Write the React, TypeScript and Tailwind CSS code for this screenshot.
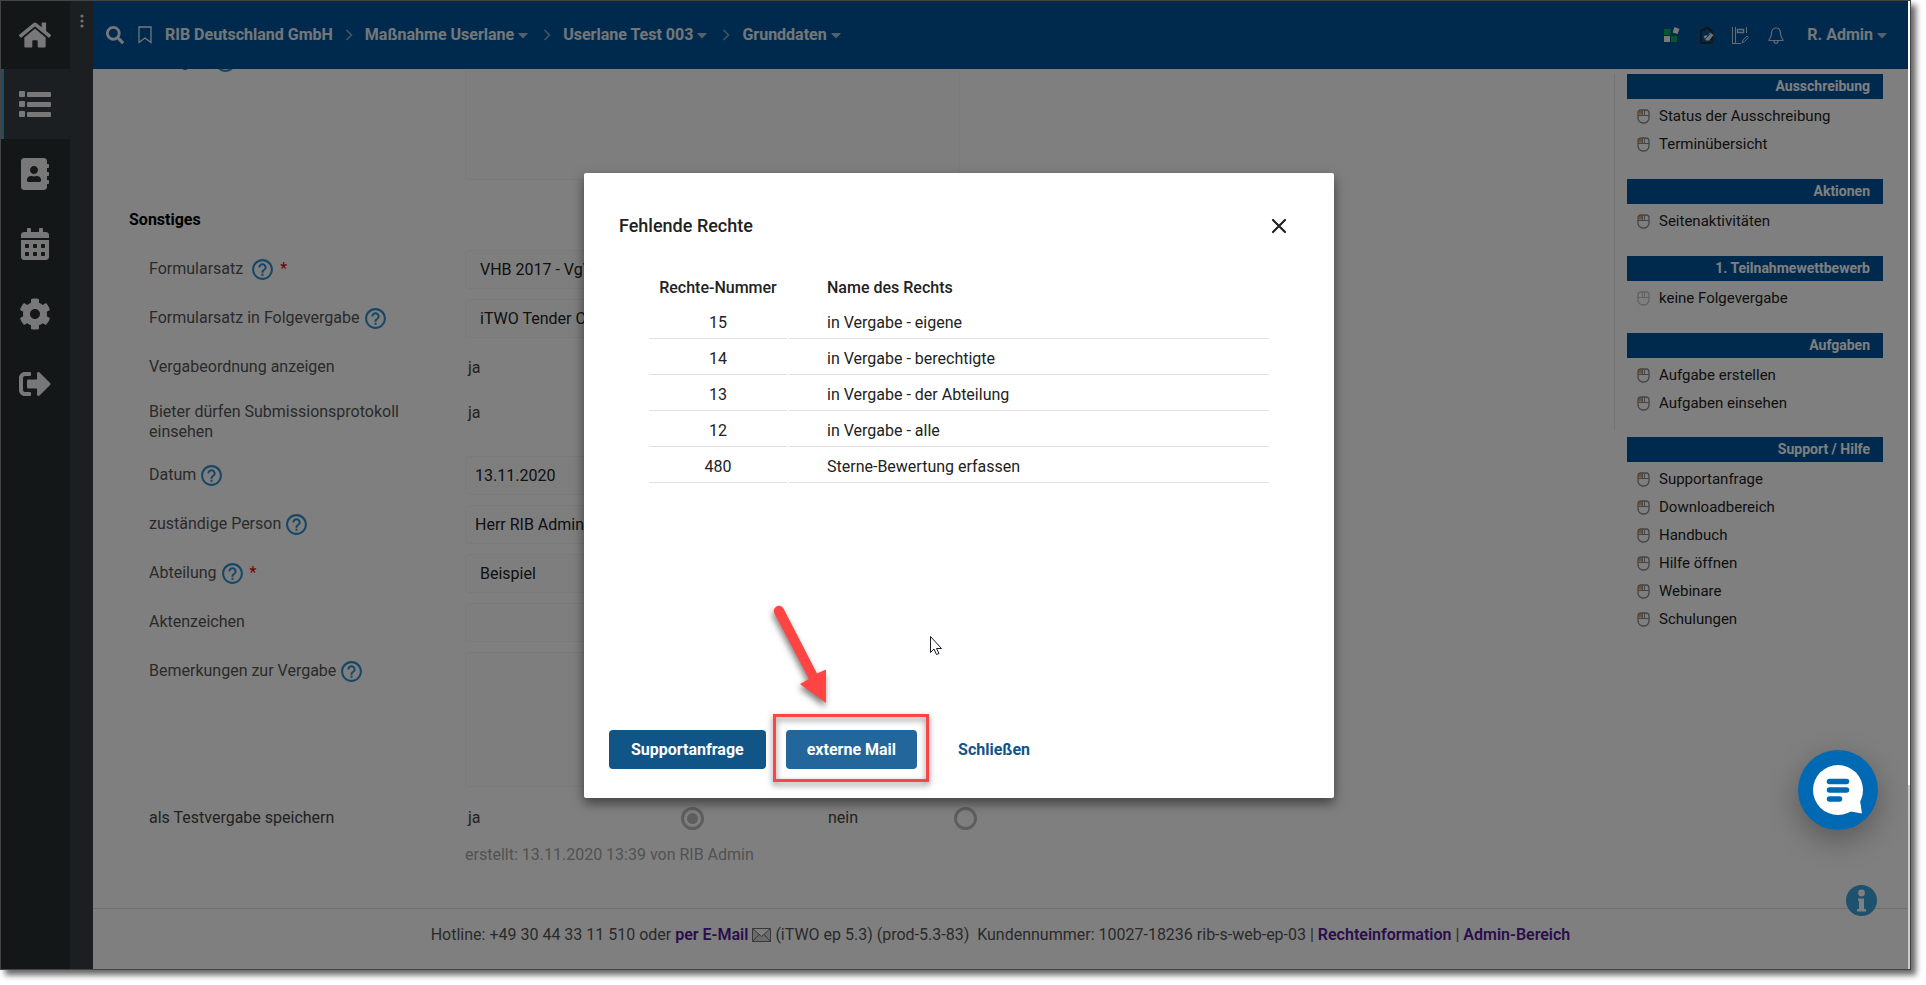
import type { ReactNode } from "react";
import {
  FaAddressBook,
  FaCalendarAlt,
  FaCaretDown,
  FaCog,
  FaHome,
  FaSearch,
  FaSignOutAlt,
} from "react-icons/fa";
import { MdHelpOutline } from "react-icons/md";

const navItems = [
  { icon: <FaAddressBook />, label: "Adressbuch" },
  { icon: <FaCalendarAlt />, label: "Kalender" },
  { icon: <FaCog />, label: "Einstellungen" },
  { icon: <FaSignOutAlt />, label: "Abmelden" },
];

const crumbs = [
  { text: "RIB Deutschland GmbH", menu: false },
  { text: "Maßnahme Userlane", menu: true },
  { text: "Userlane Test 003", menu: true },
  { text: "Grunddaten", menu: true },
];

const sections = [
  { title: "Ausschreibung", items: ["Status der Ausschreibung", "Terminübersicht"] },
  { title: "Aktionen", items: ["Seitenaktivitäten"] },
  { title: "1. Teilnahmewettbewerb", items: ["keine Folgevergabe"], disabled: true },
  { title: "Aufgaben", items: ["Aufgabe erstellen", "Aufgaben einsehen"] },
];

const support = {
  title: "Support / Hilfe",
  items: ["Supportanfrage", "Downloadbereich", "Handbuch", "Hilfe öffnen", "Webinare", "Schulungen"],
};

const rights = [
  { nr: 15, name: "in Vergabe - eigene" },
  { nr: 14, name: "in Vergabe - berechtigte" },
  { nr: 13, name: "in Vergabe - der Abteilung" },
  { nr: 12, name: "in Vergabe - alle" },
  { nr: 480, name: "Sterne-Bewertung erfassen" },
];

const fieldClass =
  "w-full max-w-[495px] rounded-[3px] border border-[#f4f4f4] bg-[#fdfdfd] text-[#222]";

const radioClass =
  "appearance-none size-[23px] rounded-full border-3 border-[#bdbdbd] checked:bg-[#bdbdbd] bg-clip-content p-[3px]";

function ListIcon() {
  return (
    <svg className="w-8 h-[27px]" viewBox="0 0 32 27" fill="currentColor">
      <rect x="0" y="0" width="6" height="6" rx="1" />
      <rect x="0" y="10" width="6" height="6" rx="1" />
      <rect x="0" y="20" width="6" height="6" rx="1" />
      <rect x="8" y="1" width="24" height="5" rx="1" />
      <rect x="8" y="11" width="24" height="5" rx="1" />
      <rect x="8" y="21" width="24" height="5" rx="1" />
    </svg>
  );
}

function MouseIcon({ disabled }: { disabled?: boolean }) {
  return (
    <svg
      className={disabled ? "w-[13px] h-[15px] opacity-50" : "w-[13px] h-[15px]"}
      viewBox="0 0 13 15"
      fill="none"
      stroke="#8a8a8a"
    >
      {!disabled && <path d="M1.500 5.500V3.500a2 2 0 0 1 2-2H6v4z" fill="#ff9a4a" stroke="none" />}
      <path d="M1 4a3 3 0 0 1 3-3h5a3 3 0 0 1 3 3v5a5 5 0 0 1-5 5H6a5 5 0 0 1-5-5z" strokeWidth="1.300" />
      <path d="M1 6.500h11M5.500 1v5M7.500 1v5" />
    </svg>
  );
}

function SideSection({ title, items, disabled }: { title: string; items: string[]; disabled?: boolean }) {
  return (
    <section>
      <h3 className="bg-[#00549a] text-white text-sm leading-[25px] font-bold text-right pr-[13px]">
        {title}
      </h3>
      <ul className="pt-[3px] pl-[10px]">
        {items.map((item) => (
          <li key={item} className="h-7">
            <a href="#" className="flex items-center gap-[9px] h-7 text-[15px] text-[#222]">
              <MouseIcon disabled={disabled} />
              {item}
            </a>
          </li>
        ))}
      </ul>
    </section>
  );
}

type RowProps = {
  label: string;
  id?: string;
  help?: boolean;
  space?: boolean;
  required?: boolean;
  children: ReactNode;
};

function Row({ label, id, help, space, required, children }: RowProps) {
  return (
    <div className="grid grid-cols-[316px_1fr] items-start mb-[10px]">
      <div className="flex items-center h-[37px] text-[#555]">
        <label htmlFor={id}>{label}</label>
        {help && (
          <button
            type="button"
            aria-label={`Hilfe zu ${label}`}
            className={space ? "ml-[7px] pt-[2px] text-[#2f8fcf]" : "ml-[3px] pt-[2px] text-[#2f8fcf]"}
          >
            <MdHelpOutline className="size-[25px]" />
          </button>
        )}
        {required && <span className="ml-[5px] text-[#e60000]">*</span>}
      </div>
      {children}
    </div>
  );
}

function HeaderIcons() {
  return (
    <div className="flex items-center text-[#c8d4e0]">
      <button type="button" aria-label="Apps" className="w-4">
        <svg className="w-4 h-4" viewBox="0 0 16 16">
          <path d="M0 2h6.500v6H0zM7 9h6v6H7z" fill="#12a860" />
          <path d="M0 9h6v6H0z" fill="#f2f2f2" />
          <path d="M10.500 0l5 2-2 5-5-1.500z" fill="#f2f2f2" />
        </svg>
      </button>
      <button type="button" aria-label="Aufgaben" className="ml-[20px]">
        <svg className="w-[14px] h-[17px]" viewBox="0 0 14 17">
          <path
            d="M3 2.500h2a2 2 0 0 1 4 0h1l2 2V15a1 1 0 0 1-1 1H2a1 1 0 0 1-1-1V4z"
            fill="none"
            stroke="#2a2a2a"
            strokeWidth="1.800"
          />
          <path d="M3.500 9.500L6 8l1.500 1L10 5.500 13.500 8 9 13.500H6z" fill="#e8e8e8" />
          <path d="M5 12l5.500-5.500" stroke="#24435f" strokeWidth=".8" />
        </svg>
      </button>
      <button type="button" aria-label="Notizbuch" className="ml-[18px]">
        <svg className="w-[17px] h-[17px]" viewBox="0 0 17 17" fill="none" stroke="currentColor">
          <path d="M.5 0v16.500M3.500 0v16.500H8M14.500 0v6M0 16.500h9" />
          <path d="M5.500 2.500h6v3h-6z" strokeWidth="1.400" />
          <path d="M10 16l1-3 4-4 1.500 1.500-4 4z" />
        </svg>
      </button>
      <button type="button" aria-label="Benachrichtigungen" className="ml-[19px]">
        <svg className="w-4 h-[17px]" viewBox="0 0 16 17" fill="none" stroke="currentColor" strokeWidth="1.200">
          <path d="M8 1C5 1 3.500 3.500 3.500 6.500c0 4-2.500 5-2.500 7h14c0-2-2.500-3-2.500-7C12.500 3.500 11 1 8 1zM6 14c0 3 4 3 4 0" />
        </svg>
      </button>
      <button type="button" className="ml-[23px] flex items-center font-bold text-white/90">
        R. Admin
        <FaCaretDown className="ml-px size-4 text-[#a3c0da]" />
      </button>
    </div>
  );
}

function Dialog() {
  return (
    <div
      role="dialog"
      aria-labelledby="dialog-title"
      className="relative flex flex-col w-[750px] min-h-[625px] bg-white rounded-[2px] shadow-[0_5px_12px_rgba(0,0,0,0.5)]"
    >
      <div className="flex items-center justify-between pt-[39px] pl-[35px] pr-[45px]">
        <h2 id="dialog-title" className="text-lg leading-7 font-medium">
          Fehlende Rechte
        </h2>
        <button type="button" aria-label="Dialog schließen">
          <svg className="size-5" viewBox="0 0 20 20" stroke="currentColor" strokeWidth="2.200" strokeLinecap="round">
            <path d="M4 4l12 12M16 4L4 16" />
          </svg>
        </button>
      </div>

      <table className="mx-[63px] mt-[29px] border-separate border-spacing-[2px]">
        <thead>
          <tr className="h-8">
            <th className="w-[138px] pt-[3px] font-medium">Rechte-Nummer</th>
            <th className="pl-[38px] pt-[3px] text-left font-medium">Name des Rechts</th>
          </tr>
        </thead>
        <tbody>
          {rights.map((right) => (
            <tr key={right.nr} className="h-[34px]">
              <td className="border-b border-[#e0e0e0] pt-[3px] text-center">{right.nr}</td>
              <td className="border-b border-[#e0e0e0] pt-[3px] pl-[38px]">{right.name}</td>
            </tr>
          ))}
        </tbody>
      </table>

      <div className="mt-auto mb-[29px] ml-[25px] flex gap-5 font-bold">
        <button type="button" className="h-[39px] px-[22px] pt-px rounded-[4px] bg-[#115488] text-white">
          Supportanfrage
        </button>
        <div className="relative">
          <button type="button" className="h-[39px] px-[21px] pt-px rounded-[4px] bg-[#22669b] text-white">
            externe Mail
          </button>
          {/* red marker with arrow */}
          <span className="absolute -top-4 -bottom-[13px] -left-[13px] -right-3 border-3 border-[#ff4444] drop-shadow-[0_3px_3px_rgba(0,0,0,0.5)]" />
          <svg
            className="absolute -top-[129px] -left-[17px] w-[70px] h-[110px] drop-shadow-[-1px_4px_3px_rgba(0,0,0,0.5)]"
            viewBox="0 0 70 110"
            fill="#ff4444"
          >
            <path d="M5.500 12.500a5 5 0 0 1 9-5L48 72.500l9-4V102L31 83l9-5z" />
          </svg>
        </div>
        <button type="button" className="h-[39px] px-[21px] pt-px text-[#115488]">
          Schließen
        </button>
      </div>

      <svg className="absolute left-[346px] top-[463px] w-3 h-5" viewBox="0 0 12 20" fill="#fff" stroke="#1a1a2a">
        <path d="M.5.500v16l3.500-3.500 2.500 5.500 2.500-1-2.500-5h5z" />
      </svg>
    </div>
  );
}

export default function App() {
  return (
    <div className="h-screen pr-[15px] pb-[15px] bg-white font-[Roboto,sans-serif] text-base leading-5 text-[#222]">
      <div className="relative flex h-full border border-[#444] overflow-clip shadow-[5px_5px_6px_rgba(0,0,0,0.6)]">
        {/* Navigation */}
        <nav className="w-[69px] shrink-0 bg-[#262e2e] text-[32px] text-[#f0f0f0]">
          <a href="#" aria-label="Startseite" className="flex items-center justify-center h-[68px] pr-px">
            <FaHome />
          </a>
          <a
            href="#"
            aria-label="Vergaben"
            className="flex items-center justify-center h-[70px] pr-1 bg-[#393f43] border-l-3 border-[#3c9ccc]"
          >
            <ListIcon />
          </a>
          {navItems.map((item) => (
            <a
              key={item.label}
              href="#"
              aria-label={item.label}
              className="flex items-center justify-center h-[70px] pr-px"
            >
              {item.icon}
            </a>
          ))}
        </nav>
        <div className="w-[23px] shrink-0 bg-[#393f43] flex justify-center items-start pt-3">
          <button type="button" aria-label="Menü">
            <svg className="w-1 h-4" viewBox="0 0 4 16" fill="#e0e0e0">
              <circle cx="2" cy="3" r="1.600" />
              <circle cx="2" cy="8" r="1.600" />
              <circle cx="2" cy="13" r="1.600" />
            </svg>
          </button>
        </div>

        <div className="flex-1 min-w-0 flex flex-col bg-white">
          <header className="flex items-center justify-between h-[68px] shrink-0 pl-[13px] pr-[18px] bg-[#00549a]">
            <div className="flex items-center text-white/90">
              <button type="button" aria-label="Suche">
                <FaSearch className="size-[18px]" />
              </button>
              <button type="button" aria-label="Lesezeichen" className="ml-[14px]">
                <svg className="w-[14px] h-[18px]" viewBox="0 0 14 18" fill="none" stroke="currentColor" strokeWidth="1.300">
                  <path d="M1 1h12v15.500l-6-4.500-6 4.500z" />
                </svg>
              </button>
              <ol className="flex items-center ml-[13px] font-bold">
                {crumbs.map((crumb, i) => (
                  <li key={crumb.text} className="flex items-center">
                    {i > 0 && (
                      <svg className="w-2 h-3 mx-3" viewBox="0 0 8 12" fill="none" stroke="#7fa9cd" strokeWidth="1.600">
                        <path d="M1.500 1l5 5-5 5" />
                      </svg>
                    )}
                    <a href="#">{crumb.text}</a>
                    {crumb.menu && <FaCaretDown className="ml-px size-4 text-[#a3c0da]" />}
                  </li>
                ))}
              </ol>
            </div>
            <HeaderIcons />
          </header>

          <div className="flex flex-1 min-h-0 overflow-hidden">
            <main className="flex-1 min-w-0 pl-14">
              <div className="grid grid-cols-[316px_1fr] items-start">
                <div className="flex items-center -mt-5 text-[#555]">
                  <label htmlFor="anlagen">Anlagen</label>
                  <button type="button" aria-label="Hilfe zu Anlagen" className="ml-[6px] text-[#2f8fcf]">
                    <MdHelpOutline className="size-[25px]" />
                  </button>
                </div>
                <textarea
                  id="anlagen"
                  className="block h-[111px] w-full max-w-[495px] resize-none rounded-b-[3px] border border-t-0 border-[#f4f4f4] bg-[#fdfdfd]"
                />
              </div>
              <h2 className="-ml-5 mt-7 mb-[18px] leading-6 font-bold text-black">Sonstiges</h2>

              <Row label="Formularsatz" id="formularsatz" help space required>
                <select id="formularsatz" className={`${fieldClass} h-[39px] pl-[14px] appearance-none`}>
                  <option>VHB 2017 - VgV</option>
                </select>
              </Row>
              <Row label="Formularsatz in Folgevergabe" id="folge" help>
                <select id="folge" className={`${fieldClass} h-[39px] pl-[14px] appearance-none`}>
                  <option>iTWO Tender Cloud</option>
                </select>
              </Row>
              <Row label="Vergabeordnung anzeigen">
                <span className="pl-[3px] leading-[39px] text-[#444]">ja</span>
              </Row>
              <div className="grid grid-cols-[316px_1fr] h-[59px] pt-[5px] text-[#555]">
                <span>
                  Bieter dürfen Submissionsprotokoll
                  <br />
                  einsehen
                </span>
                <span className="pt-px pl-[3px] text-[#444]">ja</span>
              </div>
              <Row label="Datum" id="datum" help>
                <input id="datum" defaultValue="13.11.2020" className={`${fieldClass} h-[39px] pl-[9px]`} />
              </Row>
              <Row label="zuständige Person" id="person" help>
                <input id="person" defaultValue="Herr RIB Admin" className={`${fieldClass} h-[39px] pl-[9px]`} />
              </Row>
              <Row label="Abteilung" id="abteilung" help required>
                <select id="abteilung" className={`${fieldClass} h-[39px] pl-[14px] appearance-none`}>
                  <option>Beispiel</option>
                </select>
              </Row>
              <Row label="Aktenzeichen" id="akten">
                <input id="akten" className={`${fieldClass} h-[39px] pl-[9px]`} />
              </Row>
              <Row label="Bemerkungen zur Vergabe" id="bemerkung" help>
                <textarea id="bemerkung" className={`${fieldClass} block h-[135px] resize-none`} />
              </Row>
              <div className="grid grid-cols-[316px_1fr] text-[#444]">
                <span className="leading-[42px]">als Testvergabe speichern</span>
                <div className="flex items-center h-[42px] pl-[3px]">
                  <label htmlFor="test-ja" className="w-[213px]">
                    ja
                  </label>
                  <input id="test-ja" type="radio" name="test" defaultChecked className={radioClass} />
                  <label htmlFor="test-nein" className="ml-[124px] w-[126px]">
                    nein
                  </label>
                  <input id="test-nein" type="radio" name="test" className={radioClass} />
                </div>
                <p className="col-start-2 mt-[6px] text-[#a5a5a5]">erstellt: 13.11.2020 13:39 von RIB Admin</p>
              </div>
            </main>

            <aside className="w-[294px] shrink-0 pt-[5px] pr-[25px]">
              <div className="flex flex-col gap-[21px] pl-3 pb-[13px] border-l border-[#e8e8e8]">
                {sections.map((section) => (
                  <SideSection key={section.title} {...section} />
                ))}
              </div>
              <div className="mt-[7px] pl-[13px]">
                <SideSection {...support} />
              </div>
            </aside>
          </div>

          <footer className="flex items-center justify-center h-[61px] shrink-0 border-t border-[#dcdcdc] pb-2 whitespace-pre text-[#555]">
            {"Hotline: +49 30 44 33 11 510 oder "}
            <a href="#" className="font-semibold text-[#551a99]">
              per E-Mail
            </a>
            <svg className="mx-1 w-[19px] h-[14px]" viewBox="0 0 19 14" fill="#d8d8d8" stroke="#707070">
              <path d="M.5.500h18v13H.500zM.5.500l9 8 9-8M.5 13.500l6.500-7M18.500 13.500l-6.500-7" />
            </svg>
            {"(iTWO ep 5.3) (prod-5.3-83)  Kundennummer: 10027-18236 rib-s-web-ep-03 | "}
            <a href="#" className="font-semibold text-[#551a99]">
              Rechteinformation
            </a>
            {" | "}
            <a href="#" className="font-semibold text-[#551a99]">
              Admin-Bereich
            </a>
          </footer>
        </div>

        <button type="button" aria-label="Information" className="absolute right-[33px] bottom-[53px] size-[31px]">
          <svg viewBox="0 0 31 31">
            <circle cx="15.500" cy="15.500" r="15.500" fill="#3aa2dc" />
            <circle cx="15.500" cy="8" r="3.400" fill="#fff" />
            <path d="M12 13.500h6V24h2v2.500h-9V24h2v-8h-1z" fill="#fff" />
          </svg>
        </button>

        <div className="absolute inset-0 flex items-center justify-center pl-[7px] bg-black/50">
          <Dialog />
        </div>

        <button
          type="button"
          aria-label="Chat öffnen"
          className="absolute right-8 bottom-[139px] size-20 rounded-full bg-[#0069b4] shadow-[0_10px_30px_rgba(0,0,0,0.3)]"
        >
          <svg viewBox="0 0 80 80">
            <circle cx="40" cy="40" r="25" fill="#fff" />
            <path d="M50 61l14 2.500-2-13z" fill="#fff" />
            <path d="M31.500 31.500h17M31.500 40h17M31.500 49h10" stroke="#0069b4" strokeWidth="5.500" strokeLinecap="round" />
          </svg>
        </button>

        {/* scroll bar */}
        <div className="relative w-[2px] shrink-0 flex flex-col bg-[#ccc]">
          <div className="h-[81%] bg-white" />
        </div>
      </div>
    </div>
  );
}
